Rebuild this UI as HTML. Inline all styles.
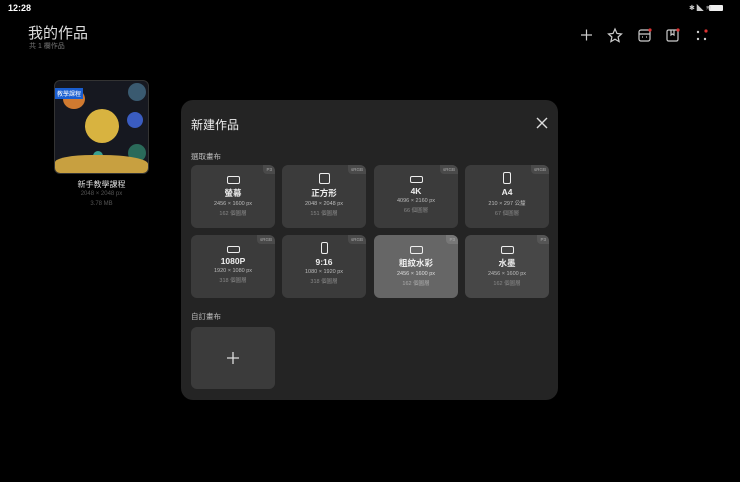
<html><head><style>
body{margin:0;width:740px;height:482px;background:#000;font-family:"Liberation Sans","Noto Sans CJK TC",sans-serif;color:#fff;position:relative;overflow:hidden}
.a{position:absolute}
.modal{left:181px;top:100px;width:377px;height:300px;background:#242424;border-radius:12px}
.card{position:absolute;width:84px;height:63px;background:#3b3b3b;border-radius:6px;text-align:center;overflow:hidden}
.card .tag{position:absolute;right:0;top:0;background:#4a4a4a;color:#aaa;font-size:4.5px;padding:2px 3px;border-bottom-left-radius:4px}
.card .ic{margin:11px auto 0;border:1.5px solid #eee;border-radius:2px}
.card .t{font-size:8.5px;margin-top:3px;color:#eee;font-weight:bold}
.card .s{font-size:5.5px;color:#bbb;margin-top:2px}
.card .l{font-size:5.5px;color:#888;margin-top:2px}
</style></head><body>
<div class="a" style="left:8px;top:3px;font-size:9px;font-weight:bold">12:28</div>
<div class="a" style="left:709px;top:5px;width:14px;height:6px;background:#eee;border-radius:1px"></div>
<div class="a" style="left:689px;top:3px;font-size:7px;color:#ccc">✱ ◣ ≋</div>
<div class="a" style="left:28px;top:22px;font-size:15px;color:#ddd">我的作品</div>
<div class="a" style="left:29px;top:41px;font-size:7px;color:#777">共 1 欄作品</div>
<svg class="a" style="left:578px;top:26px" width="150" height="20" fill="none" stroke="#ccc" stroke-width="1.2">
<path d="M3 9h11M8.5 3.5v11"/>
<path d="M37 3l2 4.5 4.5.5-3.4 3 1 4.6-4.1-2.4-4.1 2.4 1-4.6-3.4-3 4.5-.5z"/>
<rect x="61" y="4" width="11" height="11" rx="2"/><path d="M61 8h11M64 11h1M68 11h1"/>
<rect x="89" y="4" width="11" height="11" rx="1.5"/><path d="M93 4v5l1.5-1 1.5 1V4"/>
<circle cx="120" cy="6" r=".6" fill="#ccc"/><circle cx="120" cy="13" r=".6" fill="#ccc"/><circle cx="127" cy="13" r=".6" fill="#ccc"/>
<circle cx="72" cy="4" r="1.6" fill="#d33" stroke="none"/><circle cx="100" cy="4" r="1.6" fill="#d33" stroke="none"/><circle cx="128" cy="5" r="1.6" fill="#d33" stroke="none"/>
</svg>
<div class="a" style="left:54px;top:80px;width:93px;height:92px;background:#161820;border-radius:6px;overflow:hidden;border:1px solid #333">
<div class="a" style="left:30px;top:28px;width:34px;height:34px;border-radius:50%;background:#d8b340"></div>
<div class="a" style="left:73px;top:2px;width:18px;height:18px;border-radius:50%;background:#3a5a70"></div>
<div class="a" style="left:72px;top:31px;width:16px;height:16px;border-radius:50%;background:#3a5cc0"></div>
<div class="a" style="left:73px;top:63px;width:18px;height:18px;border-radius:50%;background:#2a6a5a"></div>
<div class="a" style="left:38px;top:70px;width:10px;height:10px;border-radius:50%;background:#3aa090"></div>
<div class="a" style="left:8px;top:8px;width:22px;height:20px;border-radius:50%;background:#d07a30"></div>
<div class="a" style="left:0;top:74px;width:93px;height:18px;background:#c8a040;border-radius:40% 50% 0 0"></div>
<div class="a" style="left:0;top:7px;background:#1a5ed0;font-size:6px;padding:1px 2px;color:#fff">教學課程</div>
</div>
<div class="a" style="left:54px;top:179px;width:95px;text-align:center;font-size:8px;color:#ddd">新手教學課程</div>
<div class="a" style="left:54px;top:191px;width:95px;text-align:center;font-size:6px;color:#555">2048 × 2048 px</div>
<div class="a" style="left:54px;top:201px;width:95px;text-align:center;font-size:6px;color:#555">3.78 MB</div>
<div class="a modal">
<div class="a" style="left:10px;top:16px;font-size:12px;color:#eee">新建作品</div>
<svg class="a" style="left:355px;top:17px" width="12" height="12" stroke="#ddd" stroke-width="1.4"><path d="M1 1l10 10M11 1L1 11"/></svg>
<div class="a" style="left:10px;top:51px;font-size:7.5px;color:#bbb">選取畫布</div>
<div class="a" style="left:10px;top:211px;font-size:7.5px;color:#bbb">自訂畫布</div>
<div class="card" style="left:10px;top:65px"><span class="tag">P3</span><div class="ic" style="width:11px;height:6px"></div><div class="t">螢幕</div><div class="s">2456 × 1600 px</div><div class="l">162 個圖層</div></div>
<div class="card" style="left:101px;top:65px"><span class="tag">sRGB</span><div class="ic" style="width:9px;height:9px;margin-top:8px"></div><div class="t">正方形</div><div class="s">2048 × 2048 px</div><div class="l">151 個圖層</div></div>
<div class="card" style="left:193px;top:65px"><span class="tag">sRGB</span><div class="ic" style="width:11px;height:5px"></div><div class="t">4K</div><div class="s">4096 × 2160 px</div><div class="l">66 個圖層</div></div>
<div class="card" style="left:284px;top:65px"><span class="tag">sRGB</span><div class="ic" style="width:6px;height:10px;margin-top:7px"></div><div class="t">A4</div><div class="s">210 × 297 公釐</div><div class="l">67 個圖層</div></div>
<div class="card" style="left:10px;top:135px"><span class="tag">sRGB</span><div class="ic" style="width:11px;height:5px"></div><div class="t">1080P</div><div class="s">1920 × 1080 px</div><div class="l">318 個圖層</div></div>
<div class="card" style="left:101px;top:135px"><span class="tag">sRGB</span><div class="ic" style="width:5px;height:10px;margin-top:7px"></div><div class="t">9:16</div><div class="s">1080 × 1920 px</div><div class="l">318 個圖層</div></div>
<div class="card" style="left:193px;top:135px;background:#666"><span class="tag" style="background:#777">P3</span><div class="ic" style="width:11px;height:6px"></div><div class="t">粗紋水彩</div><div class="s" style="color:#ddd">2456 × 1600 px</div><div class="l" style="color:#aaa">162 個圖層</div></div>
<div class="card" style="left:284px;top:135px;background:#474747"><span class="tag" style="background:#555">P3</span><div class="ic" style="width:11px;height:6px"></div><div class="t">水墨</div><div class="s">2456 × 1600 px</div><div class="l">162 個圖層</div></div>
<div class="card" style="left:10px;top:227px;height:62px"><svg style="margin-top:24px" width="14" height="14" stroke="#ddd" stroke-width="1.3"><path d="M7 1v12M1 7h12"/></svg></div>
</div>
</body></html>
